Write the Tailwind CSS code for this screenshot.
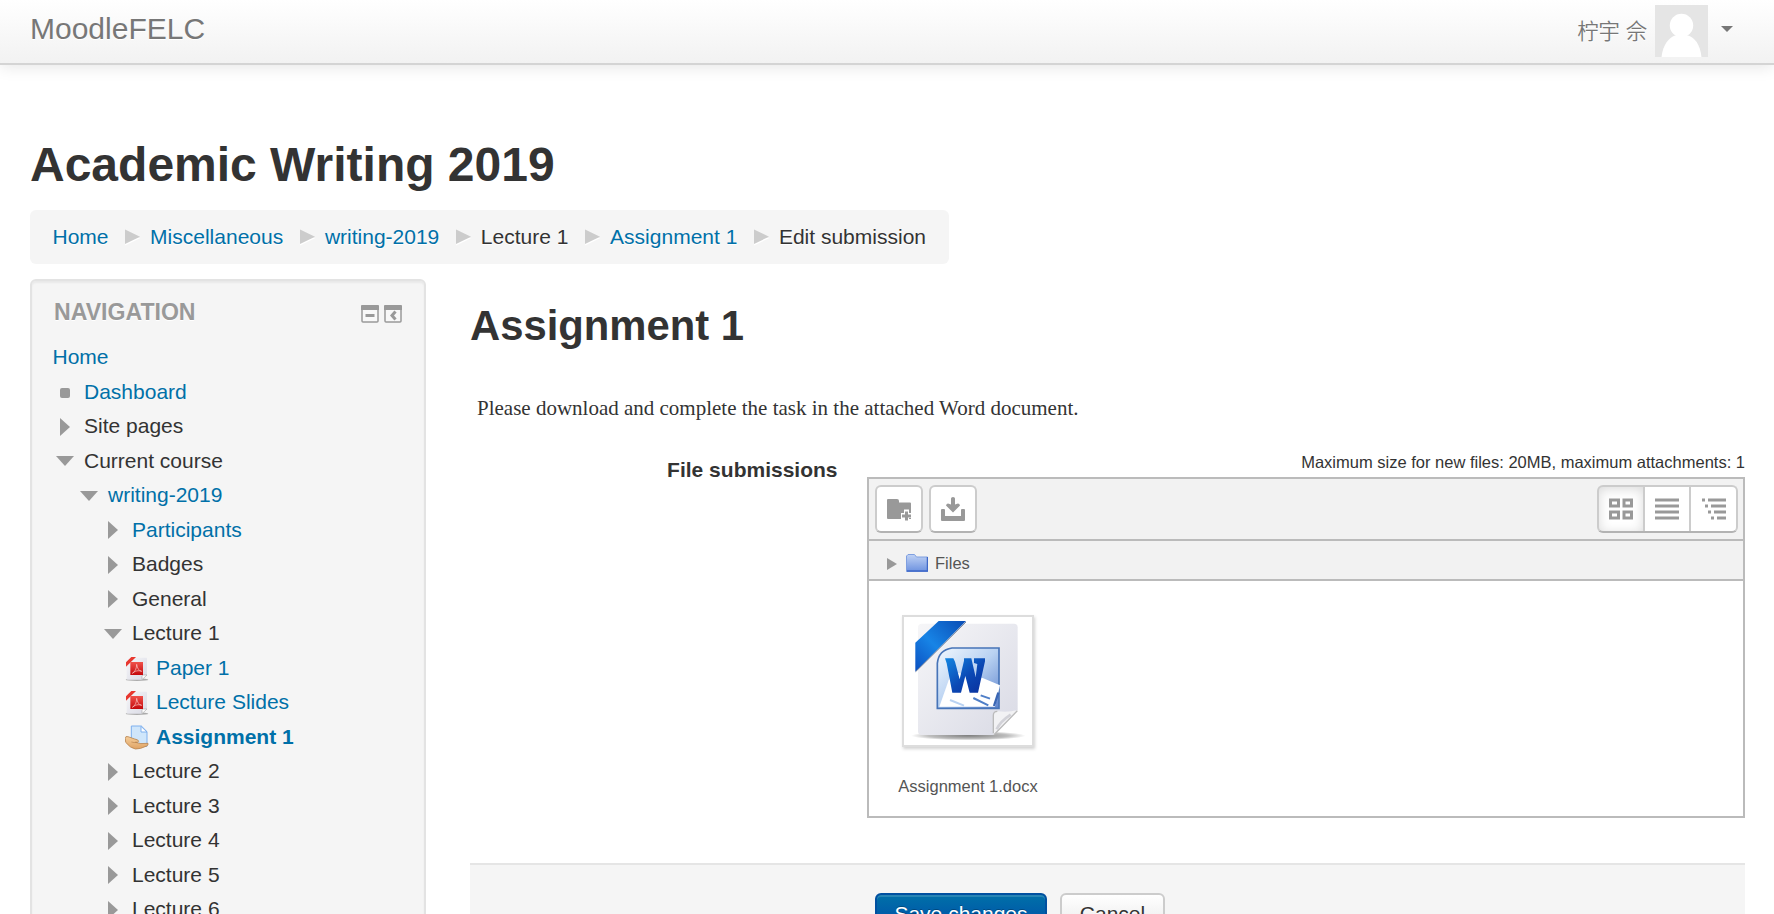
<!DOCTYPE html>
<html lang="en">
<head>
<meta charset="utf-8">
<title>Academic Writing 2019: Assignment 1</title>
<script src="https://cdn.jsdelivr.net/npm/@tailwindcss/browser@4"></script>
</head>
<body class="h-[914px] overflow-hidden bg-white font-['Liberation_Sans','Noto_Sans_CJK_SC',sans-serif] text-[21px] text-[#333]">
<svg class="absolute size-0">
  <defs>
    <linearGradient id="pg" x1="0" y1="0" x2="1" y2="1"><stop offset="0" stop-color="#f6f6f8"/><stop offset="1" stop-color="#d9dae5"/></linearGradient>
    <linearGradient id="red" x1="0" y1="0" x2="0" y2="1"><stop offset="0" stop-color="#f0514a"/><stop offset="1" stop-color="#c4080c"/></linearGradient>
    <linearGradient id="rib" x1="0" y1="1" x2="1" y2="0"><stop offset="0" stop-color="#0b4fc0"/><stop offset=".45" stop-color="#1784e6"/><stop offset="1" stop-color="#0a4cb4"/></linearGradient>
    <linearGradient id="sq" x1="0" y1="0" x2="1" y2="1"><stop offset="0" stop-color="#f2f8fe"/><stop offset=".5" stop-color="#b9d2f2"/><stop offset="1" stop-color="#5c82cc"/></linearGradient>
    <linearGradient id="wl" x1="0" y1="0" x2="1" y2="1"><stop offset="0" stop-color="#1286e2"/><stop offset=".55" stop-color="#0b48b4"/><stop offset="1" stop-color="#0a2f9c"/></linearGradient>
    <linearGradient id="fo" x1="0" y1="0" x2="0" y2="1"><stop offset="0" stop-color="#c0d2f4"/><stop offset="1" stop-color="#6d92e0"/></linearGradient>
    <linearGradient id="hand" x1="0" y1="0" x2="0" y2="1"><stop offset="0" stop-color="#f6cf9c"/><stop offset="1" stop-color="#dfa263"/></linearGradient>
    <radialGradient id="sh"><stop offset="0" stop-color="#000" stop-opacity=".5"/><stop offset=".7" stop-color="#000" stop-opacity=".25"/><stop offset="1" stop-color="#000" stop-opacity="0"/></radialGradient>
    <symbol id="right" viewBox="0 0 10 18"><path d="M0 0L10 9L0 18Z" fill="#999"/></symbol>
    <symbol id="down" viewBox="0 0 18 10"><path d="M0 0H18L9 10Z" fill="#999"/></symbol>
    <symbol id="sep" viewBox="0 0 15 17"><path d="M0 2L15 9.200L0 16.500Z" fill="#fff"/><path d="M0 0.500L15 7.700L0 15Z" fill="#ccc"/></symbol>
    <symbol id="pdf" viewBox="315 618 72 75">
      <ellipse cx="351" cy="689" rx="34" ry="4" fill="#000" opacity=".3"/>
      <path d="M323 623H379Q381 623 381 626V675L366 689H323Q320 689 320 686V626Q320 623 323 623Z" fill="url(#pg)"/>
      <path d="M366 689V679Q366 675 370 675H381Z" fill="#fff" stroke="#aaa" stroke-width="2"/>
      <path d="M318 650V637L334 621H348Z" fill="#e8382f"/>
      <rect x="331" y="636" width="38" height="39" fill="url(#red)"/>
      <path d="M337 670C345 666 350 655 350 643C352 655 357 663 365 664C355 660 345 663 337 670Z" fill="none" stroke="#ffd9d6" stroke-width="1.800"/>
    </symbol>
  </defs>
</svg>

<header class="relative flex h-[65px] items-start justify-between border-b-2 border-[#d4d4d4] bg-linear-to-b from-white to-[#f2f2f2] pl-[30px] pr-[41px] text-[#777] shadow-[0_2px_15px_rgba(0,0,0,0.1)] [text-shadow:0_1px_0_#fff]">
  <div class="pt-[12px] text-[30px] leading-[34px]">MoodleFELC</div>
  <div class="flex items-center pt-[5px]">
    <span class="mr-[8px] pt-[2px] text-[21.300px] font-[350] leading-[50px]">柠宇 佘</span>
    <svg class="h-[52px] w-[53px]" viewBox="0 0 53 52"><path fill="#e5e5e5" d="M0 0H53V52H0Z"/><circle cx="26.500" cy="20.500" r="11.700" fill="#fff"/><path fill="#fff" d="M6.500 52C8 39 14 33 20 30.500H33C40 33 45 39 46.500 52Z"/></svg>
    <svg class="-mt-[4px] ml-[13px] h-[6px] w-3" viewBox="0 0 12 6"><path fill="#777" d="M0 0H12L6 6Z"/></svg>
  </div>
</header>

<div class="pl-[30px] pr-[30px]">
  <h1 class="mt-[73px] text-[48px] font-bold leading-[53px]">Academic Writing 2019</h1>

  <nav class="mt-[19px] flex h-[54px] w-[919px] items-center whitespace-nowrap rounded-md bg-[#f5f5f5] pl-[22.500px] [text-shadow:0_1px_0_#fff]">
    <a class="text-[#0070a8]">Home</a><svg class="ml-[16.400px] mr-[10.200px] h-[17px] w-[15px]"><use href="#sep"/></svg>
    <a class="text-[#0070a8]">Miscellaneous</a><svg class="ml-[16.400px] mr-[10.300px] h-[17px] w-[15px]"><use href="#sep"/></svg>
    <a class="text-[#0070a8]">writing-2019</a><svg class="ml-[16.400px] mr-[10.200px] h-[17px] w-[15px]"><use href="#sep"/></svg>
    <span>Lecture 1</span><svg class="ml-[16.400px] mr-[10.300px] h-[17px] w-[15px]"><use href="#sep"/></svg>
    <a class="text-[#0070a8]">Assignment 1</a><svg class="ml-[16.400px] mr-[10.200px] h-[17px] w-[15px]"><use href="#sep"/></svg>
    <span>Edit submission</span>
  </nav>

  <div class="mt-[15px] flex items-start gap-[44px]">
    <aside class="h-[700px] w-[396px] shrink-0 rounded-md border-2 border-[#e3e3e3] bg-[#f5f5f5] pl-[20.500px] shadow-[inset_0_2px_2px_rgba(0,0,0,0.05)]">
      <div class="flex h-[59.350px] items-start justify-between pr-[22px] pt-[18px]">
        <h2 class="pl-[1.500px] text-[23.100px] font-bold leading-[27px] text-[#999] [text-shadow:0_1px_0_#fff]">NAVIGATION</h2>
        <div class="flex gap-[5px] pt-[6px]">
          <svg class="h-[18px] w-[18px]" viewBox="0 0 18 18"><rect x="1" y="1" width="16" height="16" rx="1" fill="#f8f8f8" stroke="#999" stroke-width="1.500"/><path fill="#999" d="M0 1Q0 0 1 0H17Q18 0 18 1V5H0ZM4.500 9h9v3h-9Z"/></svg>
          <svg class="h-[18px] w-[18px]" viewBox="0 0 18 18"><rect x="1" y="1" width="16" height="16" rx="1" fill="#f8f8f8" stroke="#999" stroke-width="1.500"/><path fill="#999" d="M0 1Q0 0 1 0H17Q18 0 18 1V5H0Z"/><path d="M11.500 6.500L8 10.500L11.500 14.500" fill="none" stroke="#999" stroke-width="3"/></svg>
        </div>
      </div>
      <ul class="leading-[34.500px]">
        <li class="text-[#0070a8]">Home</li>
        <li class="flex items-center gap-[7.500px] text-[#0070a8]"><span class="flex w-6 justify-center"><span class="mt-[2px] size-[10px] rounded-[2px] bg-[#999]"></span></span>Dashboard</li>
        <li class="flex items-center gap-[7.500px]"><span class="flex w-6 justify-center"><svg class="h-[18px] w-[10px]"><use href="#right"/></svg></span>Site pages</li>
        <li class="flex items-center gap-[7.500px]"><span class="flex w-6 justify-center"><svg class="h-[10px] w-[18px]"><use href="#down"/></svg></span>Current course</li>
        <li class="flex items-center gap-[7.500px] pl-6 text-[#0070a8]"><span class="flex w-6 justify-center"><svg class="h-[10px] w-[18px]"><use href="#down"/></svg></span>writing-2019</li>
        <li class="flex items-center gap-[7.500px] pl-12 text-[#0070a8]"><span class="flex w-6 justify-center"><svg class="h-[18px] w-[10px]"><use href="#right"/></svg></span>Participants</li>
        <li class="flex items-center gap-[7.500px] pl-12"><span class="flex w-6 justify-center"><svg class="h-[18px] w-[10px]"><use href="#right"/></svg></span>Badges</li>
        <li class="flex items-center gap-[7.500px] pl-12"><span class="flex w-6 justify-center"><svg class="h-[18px] w-[10px]"><use href="#right"/></svg></span>General</li>
        <li class="flex items-center gap-[7.500px] pl-12"><span class="flex w-6 justify-center"><svg class="h-[10px] w-[18px]"><use href="#down"/></svg></span>Lecture 1</li>
        <li class="flex items-center gap-[7.500px] pl-[72px] text-[#0070a8]"><svg class="h-[25px] w-6"><use href="#pdf"/></svg>Paper 1</li>
        <li class="flex items-center gap-[7.500px] pl-[72px] text-[#0070a8]"><svg class="h-[25px] w-6"><use href="#pdf"/></svg>Lecture Slides</li>
        <li class="flex items-center gap-[7.500px] pl-[72px] font-bold text-[#0070a8]">
          <svg class="mt-px h-[25px] w-6" viewBox="315 136 72 75">
            <path d="M334 139H364L381 156V200H334Z" fill="#cfe6fb" stroke="#7fb0ee" stroke-width="3"/>
            <path d="M363 140V157H381Z" fill="#fff" stroke="#7fb0ee" stroke-width="3"/>
            <path d="M316 176Q316 168 324 171L344 178Q356 180 356 185Q356 189 346 188Q360 194 384 191Q386 196 380 199Q360 209 346 208Q330 205 317 188Z" fill="url(#hand)" stroke="#b98550" stroke-width="2.500"/>
            <path d="M334 187Q342 190 350 188" fill="none" stroke="#b98550" stroke-width="2"/>
          </svg>Assignment 1</li>
        <li class="flex items-center gap-[7.500px] pl-12"><span class="flex w-6 justify-center"><svg class="h-[18px] w-[10px]"><use href="#right"/></svg></span>Lecture 2</li>
        <li class="flex items-center gap-[7.500px] pl-12"><span class="flex w-6 justify-center"><svg class="h-[18px] w-[10px]"><use href="#right"/></svg></span>Lecture 3</li>
        <li class="flex items-center gap-[7.500px] pl-12"><span class="flex w-6 justify-center"><svg class="h-[18px] w-[10px]"><use href="#right"/></svg></span>Lecture 4</li>
        <li class="flex items-center gap-[7.500px] pl-12"><span class="flex w-6 justify-center"><svg class="h-[18px] w-[10px]"><use href="#right"/></svg></span>Lecture 5</li>
        <li class="flex items-center gap-[7.500px] pl-12"><span class="flex w-6 justify-center"><svg class="h-[18px] w-[10px]"><use href="#right"/></svg></span>Lecture 6</li>
      </ul>
    </aside>

    <main class="w-[1275px] shrink-0">
      <h2 class="pt-[23px] text-[41.800px] font-bold leading-[48px]">Assignment 1</h2>
      <p class="mt-[46px] pl-[7px] font-['Liberation_Serif',serif] text-[21px] leading-[24px]">Please download and complete the task in the attached Word document.</p>

      <div class="mt-[31px] flex items-start justify-between">
        <div class="w-[367.500px] pt-[7px] text-right font-bold leading-[24px]">File submissions</div>
        <div class="w-[878px]">
          <div class="h-[26px] pt-px text-right text-[16.500px] leading-[20px]">Maximum size for new files: 20MB, maximum attachments: 1</div>
          <div class="h-[341px] border-2 border-[#bbb] bg-white">
            <div class="flex h-[62px] items-start justify-between border-b-2 border-[#bbb] bg-[#f2f2f2] pl-[6px] pr-[5px] pt-[6px]">
              <div class="flex gap-[6px]">
                <button class="flex size-12 items-center justify-center rounded-md border-2 border-[#ccc] border-b-[#b3b3b3] bg-white">
                  <svg class="size-6" viewBox="0 0 24 24"><path fill="#999" d="M0 3Q0 2 1 2H10Q12 2 12 4V5.500H23Q24 5.500 24 6.500V22H1Q0 22 0 21Z"/><path fill="#fff" d="M17 12.500H22V16H25V21H22V25H17V22H14V16H17Z"/><path fill="#999" d="M18 14.500H21V17.500H24V20.500H21V23.500H18V20.500H15V17.500H18Z"/></svg>
                </button>
                <button class="flex size-12 items-center justify-center rounded-md border-2 border-[#ccc] border-b-[#b3b3b3] bg-white">
                  <svg class="size-6" viewBox="0 0 24 24"><path fill="#999" d="M10 1.500Q10 0 12 0Q14 0 14 1.500V7.500L17 6.500Q18.500 6.500 19 8.500L12 15.500L5 8.500Q5.500 6.500 7 6.500L10 7.500ZM0 13Q0 12 1 12H3Q4 12 4 13V19H20V13Q20 12 21 12H23Q24 12 24 13V23Q24 24 23 24H1Q0 24 0 23Z"/></svg>
                </button>
              </div>
              <div class="flex h-12 w-[141px] overflow-hidden rounded-md border-2 border-[#ccc] border-b-[#b3b3b3] bg-white">
                <div class="flex w-[46.400px] items-center justify-center border-r-2 border-[#ccc] shadow-[inset_0_2px_12px_rgba(0,0,0,0.15)]">
                  <svg class="h-[22px] w-6" viewBox="0 0 24 22"><path fill="none" stroke="#999" stroke-width="3" d="M1.500 2H9.500V8H1.500ZM15 2H22.500V8H15ZM1.500 14H9.500V20H1.500ZM15 14H22.500V20H15Z"/></svg>
                </div>
                <div class="flex w-[46px] items-center justify-center border-r-2 border-[#ccc]">
                  <svg class="h-[22px] w-6" viewBox="0 0 24 22"><path fill="#ccc" d="M0 0H24V1H0ZM0 6H24V7H0ZM0 12H24V13H0ZM0 18H24V19H0Z"/><path fill="#999" d="M0 1H24V3.500H0ZM0 7H24V9.500H0ZM0 13H24V15.500H0ZM0 19H24V21.500H0Z"/></svg>
                </div>
                <div class="flex flex-1 items-center justify-center">
                  <svg class="h-[22px] w-6" viewBox="0 0 24 22"><path fill="#999" d="M0 1H3V3.500H0ZM6 1H24V3.500H6ZM3 7H6V9.500H3ZM9 7H24V9.500H9ZM6 13H9V15.500H6ZM12 13H24V15.500H12ZM9 19H12V21.500H9ZM15 19H24V21.500H15Z"/><path fill="#ccc" d="M0 0H3V1H0ZM6 0H24V1H6ZM3 6H6V7H3ZM9 6H24V7H9ZM6 12H9V13H6ZM12 12H24V13H12ZM9 18H12V19H9ZM15 18H24V19H15Z"/></svg>
                </div>
              </div>
            </div>
            <div class="flex h-10 items-center border-b-2 border-[#bbb] bg-[#f2f2f2] pl-[18px] pt-[7px] text-[16.500px] text-[#555]">
              <svg class="h-3 w-[10px]" viewBox="0 0 10 12"><path fill="#999" d="M0 0L10 6L0 12Z"/></svg>
              <svg class="ml-[9px] mr-[7px] -mt-[2px] h-[18px] w-[22px]" viewBox="0 0 22 18"><path fill="url(#fo)" d="M0.500 17.500V2L2 0.500H8.500L10.500 3H21.500V17.500Z" stroke="#7f9fe0"/><path d="M1 17H21.500V3" fill="none" stroke="#3f68c8" stroke-width="1.500"/></svg>
              <span>Files</span>
            </div>
            <div class="flex w-[198px] flex-col items-center pt-[34px]">
              <div class="size-[132px] border-2 border-[#ddd] bg-white shadow-[1px_2px_3px_rgba(0,0,0,0.18)]">
                <svg class="size-32" viewBox="132 81 384 384">
                  <ellipse cx="325" cy="437" rx="172" ry="14" fill="url(#sh)"/>
                  <path d="M186 101H462Q473 101 473 112V360L400 435H186Q174 435 174 424V112Q174 101 186 101Z" fill="url(#pg)"/>
                  <path d="M400 435Q404 400 400 374Q402 362 414 364Q445 368 473 360Q455 386 400 435Z" fill="#f2f2f4"/>
                  <path d="M402 434L472 362M400 430V376Q400 364 412 364" fill="none" stroke="#bbb" stroke-width="4"/>
                  <path d="M410 418Q420 395 452 374" fill="none" stroke="#d2d2d8" stroke-width="8"/>
                  <path d="M166 245V158L236 93H318Z" fill="url(#rib)"/>
                  <path d="M167 245L318 96" stroke="#31425e" stroke-width="3" opacity=".6"/>
                  <path d="M232 355V220Q236 180 276 174H417V355Z" fill="url(#sq)" stroke="#4774b8" stroke-width="5"/>
                  <path d="M238 350L275 245L368 264L420 286L405 350Z" fill="#fff"/>
                  <path d="M362 316L390 326M340 324L385 346" stroke="#4f7fc8" stroke-width="6"/>
                  <path d="M270 330L312 347" stroke="#b9d2f2" stroke-width="6"/>
                  <path d="M402 348L415 308" stroke="#3a66b4" stroke-width="7"/>
                  <path fill="url(#wl)" d="M255 205H280L285 215L299 268L312 212V205H334L347 262L352 222L342 219V205H375V214L354 308H329L316 258L303 308H277L260 220Z"/>
                </svg>
              </div>
              <div class="mt-[27px] text-[16.500px] leading-[24px] text-[#555]">Assignment 1.docx</div>
            </div>
          </div>
        </div>
      </div>

      <div class="mt-[45px] flex h-[100px] items-start gap-[13px] border-t-2 border-[#e5e5e5] bg-[#f5f5f5] pl-[405px] pt-[28px]">
        <button class="h-[45px] w-[172px] rounded-md border-2 border-[#0050a0] bg-linear-to-b from-[#0070a8] to-[#0044a8] pb-[3px] text-white shadow-[inset_0_2px_0_rgba(255,255,255,0.15)] [text-shadow:0_-1px_0_rgba(0,0,0,0.25)]">Save changes</button>
        <button class="h-[45px] w-[105px] rounded-md border-2 border-[#ccc] bg-linear-to-b from-white to-[#e6e6e6] pb-[3px] [text-shadow:0_1px_0_#fff]">Cancel</button>
      </div>
    </main>
  </div>
</div>
</body>
</html>
